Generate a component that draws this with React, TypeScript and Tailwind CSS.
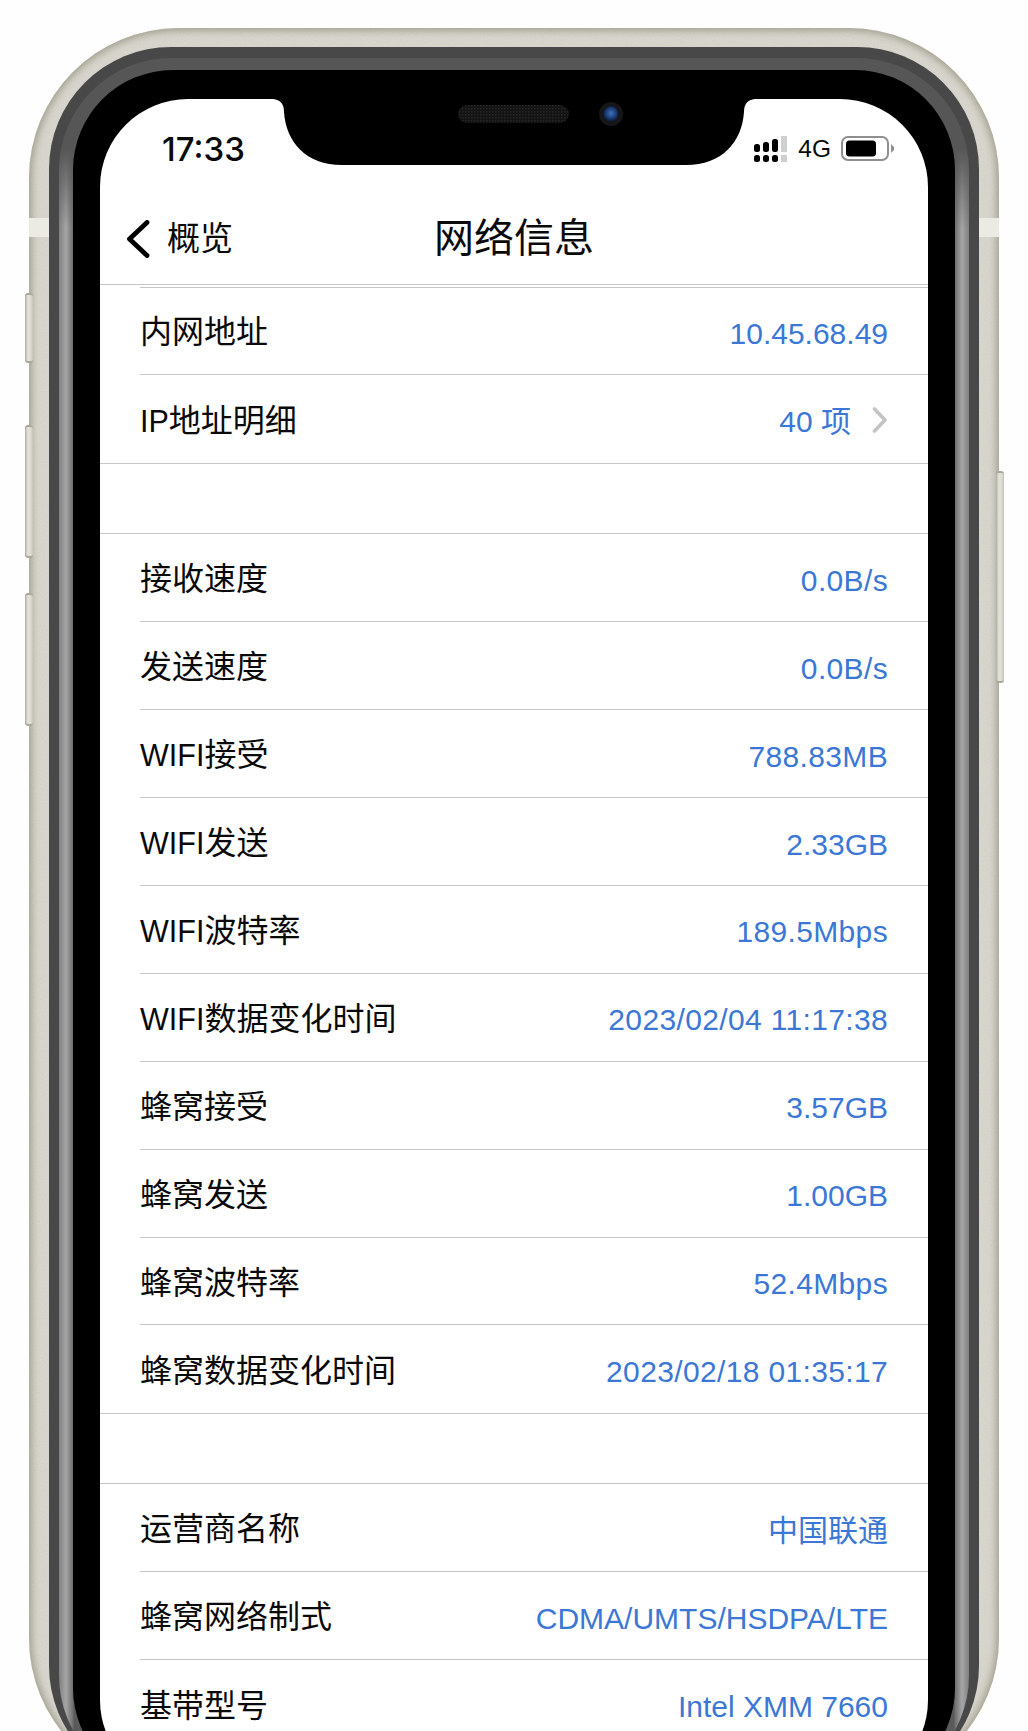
import React from "react";

const font = "font-['Liberation_Sans','Noto_Sans_CJK_SC',sans-serif]";

function Label({ text }: { text: string }) {
  const m = text.match(/^([A-Za-z]+)(.*)$/);
  if (!m) return <span className="text-[32px] leading-[40px] text-[#0a0a0a] mb-[1px]">{text}</span>;
  return (
    <span className="text-[32px] leading-[40px] text-[#0a0a0a] mb-[1px]">
      <span className="text-[30.5px]">{m[1]}</span>
      {m[2]}
    </span>
  );
}

type RowData = { label: string; value: string; chevron?: boolean; wide?: boolean };

function Row({ label, value, chevron, last, wide }: RowData & { last?: boolean }) {
  return (
    <div className="pl-[40px]">
      <div className={`h-[87.9px] pr-[40px] pt-[4px] flex items-center justify-between ${last ? "" : "border-b border-[#c6c6c8]"}`}>
        <Label text={label} />
        <span className={`flex items-center text-[30px] leading-[40px] text-[#3b78d6] mt-[2px] ${wide ? "tracking-[0.35px]" : ""}`}>
          {value}
          {chevron && (
            <svg width="16" height="26" viewBox="0 0 16 26" className="ml-[21px] mb-[4px]" fill="none">
              <path d="M2.5 2 L13 13 L2.5 24" stroke="#c4c4c6" strokeWidth="3.6" strokeLinecap="round" strokeLinejoin="round" />
            </svg>
          )}
        </span>
      </div>
    </div>
  );
}

function Section({ rows }: { rows: RowData[] }) {
  return (
    <div className="border-b border-[#c6c6c8]">
      {rows.map((r, i) => (
        <Row key={r.label} {...r} last={i === rows.length - 1} />
      ))}
    </div>
  );
}

function Signal() {
  return (
    <svg width="34" height="27" viewBox="0 0 34 27">
      <rect x="0" y="8" width="6" height="8" rx="2.5" fill="#000" />
      <rect x="9" y="6" width="6" height="10" rx="2.5" fill="#000" />
      <rect x="18" y="3" width="6" height="13" rx="2.5" fill="#000" />
      <rect x="27" y="0" width="6" height="16" fill="#cfcfcf" />
      <rect x="0" y="19" width="6" height="7" rx="2.5" fill="#000" />
      <rect x="9" y="19" width="6" height="7" rx="2.5" fill="#000" />
      <rect x="18" y="19" width="6" height="7" rx="2.5" fill="#000" />
      <rect x="27" y="19" width="6" height="7" fill="#cfcfcf" />
    </svg>
  );
}

function Battery() {
  return (
    <svg width="54" height="26" viewBox="0 0 54 26">
      <rect x="1" y="1" width="46" height="23" rx="6" fill="none" stroke="#8f8f8f" strokeWidth="2" />
      <rect x="5" y="4.5" width="30" height="16" rx="3.5" fill="#000" />
      <path d="M50 8 L53 11 L53 14 L50 17 Z" fill="#8f8f8f" />
    </svg>
  );
}

function Notch() {
  return (
    <svg className="absolute left-[160px] top-0" width="510" height="70" viewBox="260 99 510 70">
      <defs>
        <radialGradient id="lens" cx="50%" cy="45%" r="55%">
          <stop offset="0%" stopColor="#3f6fb8" />
          <stop offset="60%" stopColor="#1c3f7c" />
          <stop offset="100%" stopColor="#0b1730" />
        </radialGradient>
        <pattern id="mesh" width="3" height="3" patternUnits="userSpaceOnUse">
          <rect width="3" height="3" fill="#131313" />
          <rect width="1.5" height="1.5" fill="#262626" />
        </pattern>
      </defs>
      <path
        d="M262 99 L273 99 Q284 100 284 112 C286 142 306 165 342 165 L686 165 C722 165 742 142 744 112 Q744 100 755 99 L766 99 Z"
        fill="#000"
      />
      <rect x="458" y="105" width="111" height="18" rx="9" fill="url(#mesh)" />
      <circle cx="611" cy="114" r="12" fill="#16161a" />
      <circle cx="611" cy="114" r="7.5" fill="url(#lens)" />
    </svg>
  );
}

function SideButton({ className }: { className: string }) {
  return (
    <div
      className={`absolute z-10 w-[8px] rounded-[3px] bg-[linear-gradient(90deg,#aeada2,#e4e3da_35%,#dedcd2_70%,#c4c3b8)] border-y-2 border-[#a9a89c] ${className}`}
    />
  );
}

function MetalGrain() {
  return (
    <svg className="absolute inset-0 h-full w-full rounded-[150px] opacity-[0.14]" aria-hidden="true">
      <filter id="grain">
        <feTurbulence type="fractalNoise" baseFrequency="0.9" numOctaves="2" seed="4" />
        <feColorMatrix type="saturate" values="0" />
      </filter>
      <rect width="100%" height="100%" filter="url(#grain)" />
    </svg>
  );
}

export default function App() {
  return (
    <div className={`h-[1731px] overflow-hidden bg-[#fefefe] pt-[28px] pl-[29px] pr-[29px] ${font}`}>
      <div className="relative h-[1760px]">
        <SideButton className="left-[-4px] top-[265px] h-[70px]" />
        <SideButton className="left-[-4px] top-[397px] h-[133px]" />
        <SideButton className="left-[-4px] top-[565px] h-[133px]" />
        <SideButton className="right-[-5px] top-[443px] h-[212px]" />

        <div className="relative h-full rounded-[150px] bg-[#d8d6cd] shadow-[inset_0_0_7px_3px_#a3a08f] pt-[19px] px-[20px]">
          <MetalGrain />
          <div className="absolute left-0 top-[190px] h-[19px] w-[20px] bg-[#ecebe3]" />
          <div className="absolute right-0 top-[190px] h-[19px] w-[20px] bg-[#ecebe3]" />

          <div className="relative h-full rounded-[122px] bg-[#484848] pt-[11px] px-[10px]">
            <div className="h-full rounded-[112px] bg-[linear-gradient(180deg,#565656_0px,#565656_90px,#56565600_170px),linear-gradient(90deg,#808080_0px,#a6a6a6_7px,#6e6e6e_14px,#5a5a5a_15px,#5a5a5a_calc(100%-15px),#6e6e6e_calc(100%-14px),#a6a6a6_calc(100%-7px),#808080_100%)] pt-[12px] px-[14px]">
              <div className="h-full rounded-[100px] bg-black pt-[29px] pl-[27px] pr-[27px]">
                <div className="relative h-full rounded-[88px] bg-white overflow-hidden">
                  <Notch />

                  <div className="flex h-[86px] items-start justify-between pt-[28px] pl-[62px] pr-[33px]">
                    <span className="font-['Inter'] text-[33px] leading-[44px] font-medium text-[#0a0a0a]">17:33</span>
                    <div className="flex items-center gap-[10px] pt-[7px]">
                      <Signal />
                      <span className="text-[24.5px] leading-[30px] text-[#0a0a0a]">4G</span>
                      <Battery />
                    </div>
                  </div>

                  <div className="relative flex h-[100px] items-center justify-center border-b border-[#c6c6c8] pt-[7px]">
                    <div className="absolute left-[26px] top-[34px] flex items-center gap-[17px]">
                      <svg width="24" height="38" viewBox="0 0 24 38" fill="none">
                        <path d="M21 2.5 L3.5 19 L21 35.5" stroke="#000" strokeWidth="4.8" strokeLinecap="round" strokeLinejoin="round" />
                      </svg>
                      <span className="text-[33px] leading-[40px] text-[#0a0a0a]">概览</span>
                    </div>
                    <span className="text-[40px] leading-[48px] text-[#0a0a0a]">网络信息</span>
                  </div>

                  <div className="ml-[40px] mt-[1.5px] border-b border-[#c6c6c8]" />

                  <Section
                    rows={[
                      { label: "内网地址", value: "10.45.68.49" },
                      { label: "IP地址明细", value: "40 项", chevron: true },
                    ]}
                  />
                  <div className="h-[69.2px]" />
                  <div className="border-t border-[#c6c6c8]" />
                  <Section
                    rows={[
                      { label: "接收速度", value: "0.0B/s", wide: true },
                      { label: "发送速度", value: "0.0B/s", wide: true },
                      { label: "WIFI接受", value: "788.83MB", wide: true },
                      { label: "WIFI发送", value: "2.33GB" },
                      { label: "WIFI波特率", value: "189.5Mbps", wide: true },
                      { label: "WIFI数据变化时间", value: "2023/02/04 11:17:38", wide: true },
                      { label: "蜂窝接受", value: "3.57GB" },
                      { label: "蜂窝发送", value: "1.00GB" },
                      { label: "蜂窝波特率", value: "52.4Mbps", wide: true },
                      { label: "蜂窝数据变化时间", value: "2023/02/18 01:35:17", wide: true },
                    ]}
                  />
                  <div className="h-[69px]" />
                  <div className="border-t border-[#c6c6c8]" />
                  <Section
                    rows={[
                      { label: "运营商名称", value: "中国联通" },
                      { label: "蜂窝网络制式", value: "CDMA/UMTS/HSDPA/LTE" },
                      { label: "基带型号", value: "Intel XMM 7660" },
                    ]}
                  />
                </div>
              </div>
            </div>
          </div>
        </div>
      </div>
    </div>
  );
}
